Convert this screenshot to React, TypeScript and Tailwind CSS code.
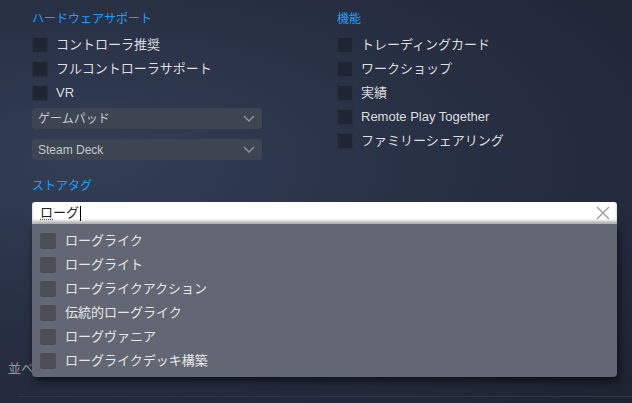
const FONT = { fontFamily: 'Arial, "Noto Sans CJK JP", sans-serif' };

const hardware = ["コントローラ推奨", "フルコントローラサポート", "VR"];
const features = [
  "トレーディングカード",
  "ワークショップ",
  "実績",
  "Remote Play Together",
  "ファミリーシェアリング",
];
const suggestions = [
  "ローグライク",
  "ローグライト",
  "ローグライクアクション",
  "伝統的ローグライク",
  "ローグヴァニア",
  "ローグライクデッキ構築",
];

function CheckRow({ label }: { label: string }) {
  return (
    <div className="flex h-6 items-center gap-2">
      <span className="h-4 w-4 shrink-0 rounded-[2px] bg-[#1f2532] shadow-[inset_0_0_0_1px_#283040]" />
      <span className="text-[13px] text-[#dcdedf]">{label}</span>
    </div>
  );
}

function Select({ label }: { label: string }) {
  return (
    <div className="flex h-[21px] w-[230px] items-center justify-between rounded-[3px] bg-[#3d4452] pl-[6px] pr-[6px]">
      <span className="text-[12px] text-[#c6c9cc]">{label}</span>
      <svg width="12" height="7" viewBox="0 0 12 7" className="mr-[1px]">
        <path d="M1 1l5 5 5-5" fill="none" stroke="#8b929c" strokeWidth="1.5" />
      </svg>
    </div>
  );
}

export default function App() {
  return (
    <div
      style={FONT}
      className="relative h-[403px] w-[632px] overflow-hidden bg-[radial-gradient(ellipse_at_15%_40%,#333e55_0%,#283044_45%,#1d2331_100%)]"
    >
      <div className="flex px-8 pt-[11px]">
        <div className="w-[305px]">
          <h3 className="mb-[6px] text-[12px] leading-4 text-[#1a9fff]">ハードウェアサポート</h3>
          {hardware.map((h) => (
            <CheckRow key={h} label={h} />
          ))}
          <div className="mt-[3px] flex flex-col gap-[10px]">
            <Select label="ゲームパッド" />
            <Select label="Steam Deck" />
          </div>
        </div>
        <div>
          <h3 className="mb-[6px] text-[12px] leading-4 text-[#1a9fff]">機能</h3>
          {features.map((f) => (
            <CheckRow key={f} label={f} />
          ))}
        </div>
      </div>

      <div className="pl-8 pr-[15px] pt-[18px]">
        <h3 className="mb-2 text-[12px] leading-4 text-[#1a9fff]">ストアタグ</h3>
        <div className="relative">
          <div className="flex h-[22px] items-center justify-between rounded-t-[3px] bg-white pl-2 pr-[7px] shadow-[inset_0_-3px_3px_rgba(0,0,0,0.25)]">
            <span className="flex items-center text-[13px] text-[#222]">
              <span className="underline decoration-dotted decoration-[#555] underline-offset-2">ロ</span>
              ーグ
              <span className="ml-[1px] h-[15px] w-px bg-black" />
            </span>
            <svg width="14" height="14" viewBox="0 0 14 14">
              <path d="M1 1l12 12M13 1L1 13" stroke="#9a9a9a" strokeWidth="1.3" />
            </svg>
          </div>
          <div className="absolute left-0 right-0 top-[22px] z-10 rounded-b-[4px] bg-[#636773] pb-1 pl-2 pt-[5px] shadow-[2px_4px_8px_rgba(0,0,0,0.6)]">
            {suggestions.map((s) => (
              <div key={s} className="flex h-6 items-center gap-[9px]">
                <span className="h-4 w-4 shrink-0 rounded-[2px] bg-[#4b4e57]" />
                <span className="text-[13px] text-[#e6e7e8]">{s}</span>
              </div>
            ))}
          </div>
        </div>
      </div>

      <div className="mt-[137px] pl-2 text-[13px] leading-4 text-[#8f98a0]">並べ替え基準</div>
      <div className="ml-[18px] mt-[19px] h-px bg-[#2f3747]" />
    </div>
  );
}
